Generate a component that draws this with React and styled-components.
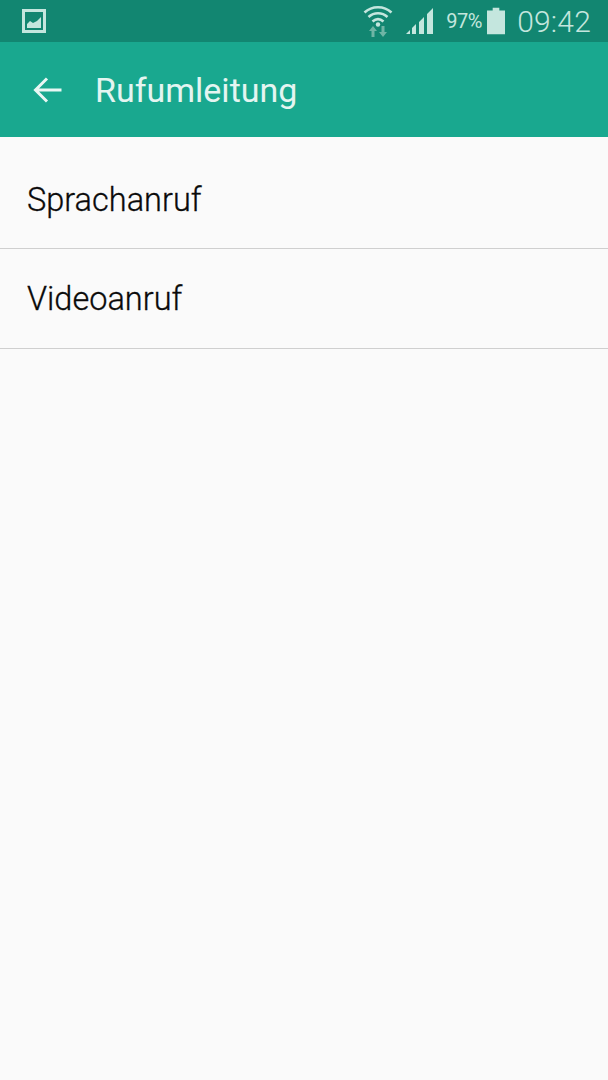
import React from "react"
import styled, { createGlobalStyle } from "styled-components"

const GlobalStyle = createGlobalStyle`
  html, body {
    margin: 0;
    padding: 0;
    background: #fafafa;
  }
`

const Screen = styled.div`
  width: 608px;
  height: 1080px;
  display: flex;
  flex-direction: column;
  background: #fafafa;
  font-family: Roboto, "Liberation Sans", sans-serif;
  overflow: hidden;
`

const StatusBar = styled.div`
  height: 42px;
  flex-shrink: 0;
  display: flex;
  align-items: center;
  justify-content: space-between;
  padding: 0 17px 0 22px;
  background: #128671;
  color: #c4e6de;
`

const StatusRight = styled.div`
  display: flex;
  align-items: center;
`

const Signal = styled.svg`
  margin-left: 13px;
`

const Percent = styled.span`
  font-size: 20px;
  margin-left: 12px;
  letter-spacing: -0.4px;
`

const Battery = styled.svg`
  margin-left: 5px;
`

const Clock = styled.span`
  font-size: 30px;
  font-weight: 300;
  margin-left: 12px;
  letter-spacing: 0.2px;
`

const AppBar = styled.div`
  height: 95px;
  flex-shrink: 0;
  display: flex;
  align-items: center;
  padding-left: 33px;
  box-sizing: border-box;
  background: #19a88f;
`

const Title = styled.h1`
  margin: 0 0 0 32px;
  font-size: 34px;
  font-weight: 400;
  color: #e4f5f1;
`

const Item = styled.div`
  display: flex;
  align-items: center;
  box-sizing: border-box;
  height: ${({ $height }) => $height}px;
  padding: ${({ $top }) => $top}px 0 0 27px;
  border-bottom: 1px solid #cfcfcf;
  font-size: 32.5px;
  font-weight: 300;
  color: #0a0a0a;
  -webkit-text-stroke: 0.3px #0a0a0a;
`

export default function App() {
  return (
    <Screen>
      <GlobalStyle />
      <StatusBar>
        <svg width="24" height="24" viewBox="0 0 24 24">
          <rect x="1.5" y="1.5" width="21" height="21" fill="none" stroke="#c4e6de" strokeWidth="3" />
          <path d="M5 19v-4l3-3 3 2 4-2 4-4v11z" fill="#c4e6de" />
        </svg>
        <StatusRight>
          <svg width="30" height="34" viewBox="0 0 30 34">
            <g fill="none" stroke="#c4e6de" strokeWidth="2.6">
              <path d="M1.5 8.5C9 1.5 21 1.5 28.5 8.5" />
              <path d="M5.5 13C11 8 19 8 24.5 13" />
              <path d="M9.5 17.5C13 14.5 17 14.5 20.5 17.5" />
            </g>
            <circle cx="15" cy="20.5" r="2.2" fill="#c4e6de" />
            <path d="M10 22l4 5h-2.5v6h-3v-6H6zM20 33l-4-5h2.500v-6h3v6H24z" fill="#6fb5a5" />
          </svg>
          <Signal width="28" height="28" viewBox="0 0 28 28">
            <path d="M0 27l4-4v4z" fill="#c4e6de" />
            <path d="M6 21l4-4v10H6zM13 15l5-5v17h-5zM21 7l6-6v26h-6z" fill="#c4e6de" />
          </Signal>
          <Percent>97%</Percent>
          <Battery width="18" height="28" viewBox="0 0 19 28">
            <path d="M6 0h7v3h6v25H0V3h6z" fill="#c4e6de" />
          </Battery>
          <Clock>09:42</Clock>
        </StatusRight>
      </StatusBar>
      <AppBar>
        <svg width="30" height="28" viewBox="0 0 30 28">
          <path d="M28.5 14H3M14 2.500L2.500 14 14 25.500" fill="none" stroke="#e9f7f4" strokeWidth="3" />
        </svg>
        <Title>Rufumleitung</Title>
      </AppBar>
      <Item $height={112} $top={15}>Sprachanruf</Item>
      <Item $height={100} $top={1}>Videoanruf</Item>
    </Screen>
  )
}
